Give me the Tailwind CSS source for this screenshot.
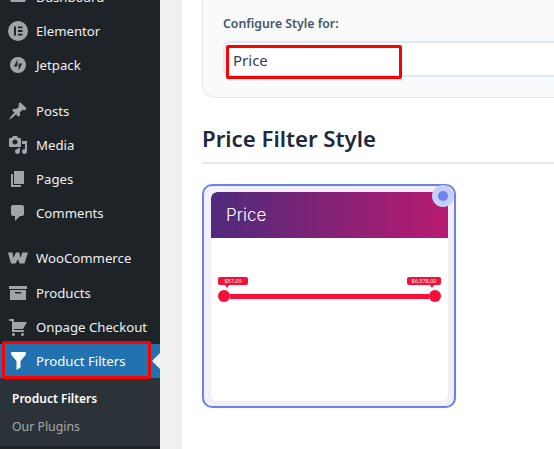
<!DOCTYPE html>
<html lang="en">
<head>
  <meta charset="UTF-8">
  <title>Product Filters</title>
  <script src="https://cdn.jsdelivr.net/npm/@tailwindcss/browser@4"></script>
</head>
<body class="w-[554px] h-[449px] overflow-hidden bg-white font-['Noto_Sans',sans-serif]">
  <div class="flex h-[449px] overflow-hidden">
    <!-- admin menu -->
    <aside class="relative w-[160px] shrink-0 h-[449px] overflow-hidden bg-[#1d2327] text-[#f0f0f1] text-[13.2px]">
      <div class="mt-[-20px] flex flex-col">
        <div class="flex h-[34px] items-center">
          <div class="w-[36px] pl-[8px]"><svg class="w-[20px] h-[20px]" viewBox="0 0 20 20" fill="#a0a5aa"><path d="M3 15a8 8 0 1 1 14 0z"/></svg></div>
          <span class="pt-[2px]">Dashboard</span>
        </div>
        <div class="flex h-[34px] items-center">
          <div class="w-[36px] pl-[8px]"><svg class="w-[20px] h-[20px]" viewBox="0 0 20 20"><circle cx="10" cy="10" r="10" fill="#a0a5aa"/><path fill="#1d2327" d="M6 5.5h2v9H6zM10 5.5h4.500v1.800H10zM10 9.100h4.500v1.800H10zM10 12.700h4.500v1.800H10z"/></svg></div>
          <span class="pt-[2px]">Elementor</span>
        </div>
        <div class="flex h-[34px] items-center">
          <div class="w-[36px] pl-[10px]"><svg class="w-[16px] h-[16px]" viewBox="0 0 16 16"><circle cx="8" cy="8" r="8" fill="#a0a5aa"/><path fill="#1d2327" d="M7.400 2.500v7H3.800zM8.600 13.500v-7h3.600z"/></svg></div>
          <span class="pt-[2px]">Jetpack</span>
        </div>
        <div class="flex h-[34px] mt-[12px] items-center">
          <div class="w-[36px] pl-[8px]"><svg class="w-[20px] h-[20px]" viewBox="0 0 20 20" fill="#a0a5aa"><path d="M10.440 3.020l1.820-1.820 6.360 6.350-1.830 1.820c-1.050-.68-2.480-.57-3.410.36l-.75.75c-.92.930-1.040 2.350-.35 3.410l-1.830 1.820-2.410-2.410-2.800 2.790c-.42.42-3.380 2.710-3.800 2.290s1.860-3.390 2.280-3.810l2.790-2.790L4.100 9.360l1.830-1.820c1.050.69 2.480.57 3.400-.36l.75-.75c.93-.92 1.050-2.350.36-3.410z"/></svg></div>
          <span class="pt-[2px]">Posts</span>
        </div>
        <div class="flex h-[34px] items-center">
          <div class="w-[36px] pl-[8px]"><svg class="w-[20px] h-[20px]" viewBox="0 0 20 20" fill="#a0a5aa"><path d="M13 11V4c0-.55-.45-1-1-1h-1.670L9 1H5L3.670 3H2c-.55 0-1 .45-1 1v7c0 .55.45 1 1 1h10c.55 0 1-.45 1-1zM7 4.500c1.380 0 2.500 1.120 2.500 2.500S8.380 9.500 7 9.500 4.500 8.380 4.500 7 5.620 4.500 7 4.500zM14 6h5v10.500c0 1.380-1.120 2.500-2.500 2.500S14 17.880 14 16.500s1.120-2.500 2.500-2.500c.17 0 .34.02.5.05V9h-3V6zm-4 8.050V13h2v3.500c0 1.380-1.120 2.500-2.500 2.500S7 17.880 7 16.500 8.120 14 9.500 14c.17 0 .34.02.5.05z"/></svg></div>
          <span class="pt-[2px]">Media</span>
        </div>
        <div class="flex h-[34px] items-center">
          <div class="w-[36px] pl-[8px]"><svg class="w-[20px] h-[20px]" viewBox="0 0 20 20" fill="#a0a5aa"><path d="M6 15V2h10v13H6zm-1 1h8v2H3V5h2v11z"/></svg></div>
          <span class="pt-[2px]">Pages</span>
        </div>
        <div class="flex h-[34px] items-center">
          <div class="w-[36px] pl-[8px]"><svg class="w-[20px] h-[20px]" viewBox="0 0 20 20" fill="#a0a5aa"><path d="M5 2h9c1.100 0 2 .9 2 2v7c0 1.100-.9 2-2 2h-2l-5 5v-5H5c-1.100 0-2-.9-2-2V4c0-1.100.9-2 2-2z"/></svg></div>
          <span class="pt-[2px]">Comments</span>
        </div>
        <div class="flex h-[34px] mt-[11px] mb-px items-center">
          <div class="w-[36px] pl-[8px]"><svg class="w-[20px] h-[12px]" viewBox="0 0 20 12" fill="#a0a5aa"><path d="M0 .5h4.500l.7 5.500L8 .5h3.500l.6 5.500L14.500.5H20l-3.500 11H11.500L10 7l-2.500 4.500H3z"/></svg></div>
          <span class="pt-[2px]">WooCommerce</span>
        </div>
        <div class="flex h-[34px] items-center">
          <div class="w-[36px] pl-[8px]"><svg class="w-[20px] h-[20px]" viewBox="0 0 20 20" fill="#a0a5aa"><path d="M1 3h18v3H1zM2 7h16v10H2zM7 9v1.500h6V9z" fill-rule="evenodd"/></svg></div>
          <span class="pt-[2px]">Products</span>
        </div>
        <div class="flex h-[34px] items-center">
          <div class="w-[36px] pl-[8px]"><svg class="w-[20px] h-[20px]" viewBox="0 0 20 20" fill="#a0a5aa"><path d="M6 13h9c.55 0 1 .45 1 1s-.45 1-1 1H5c-.55 0-1-.45-1-1V4H2c-.55 0-1-.45-1-1s.45-1 1-1h3c.55 0 1 .45 1 1v2h13l-4 7H6v1zm-.5 3c.83 0 1.500.67 1.500 1.500S6.330 19 5.500 19 4 18.330 4 17.500 4.670 16 5.500 16zm9 0c.83 0 1.500.67 1.500 1.500s-.67 1.500-1.500 1.500-1.500-.67-1.500-1.500.67-1.500 1.500-1.500z"/></svg></div>
          <span class="pt-[2px]">Onpage Checkout</span>
        </div>
        <div class="relative flex h-[34px] items-center bg-[#2271b1] text-white">
          <div class="w-[36px] pl-[11px]"><svg class="w-[15px] h-[18px]" viewBox="0 0 15 18" fill="#fff"><path d="M1 0h13q1 0 1 1v1.500L9.500 9v6.500L5.500 18V9L0 2.500V1q0-1 1-1z"/></svg></div>
          <span class="pt-[2px]">Product Filters</span>
          <div class="absolute right-0 top-[9px] w-0 h-0 border-y-[8px] border-y-transparent border-r-[8px] border-r-[#f0f0f1]"></div>
        </div>
        <div class="h-[68px] bg-[#2c3338] pt-[7px] pl-[12px] text-[12.3px] leading-[28px]">
          <div class="font-semibold text-[12px] text-white">Product Filters</div>
          <div class="text-[#a7aaad]">Our Plugins</div>
        </div>
      </div>
      <!-- red annotation -->
      <div class="absolute left-[2px] top-[341px] w-[149px] h-[38px] border-[3px] border-[#ff0000] rounded-[2px]"></div>
    </aside>
    <div class="w-[22px] shrink-0 bg-[#f0f0f1]"></div>
    <!-- content -->
    <main class="relative flex-1 min-w-0 pl-[20px] text-[#1e293b]">
      <div class="mt-[-20px] h-[118px] w-[400px] rounded-bl-[14px] border border-r-0 border-[#e2e8f0] bg-[#f8fafc] pl-[20px] pt-[33px]">
        <div class="text-[12.3px] leading-[20px] font-semibold text-[#475569]">Configure Style for:</div>
        <div class="mt-[7px] h-[36px] rounded-l-[8px] border-2 border-r-0 border-[#e2e8f0] bg-white pl-[8px] text-[15px] leading-[34px] text-[#334155]">Price</div>
      </div>
      <h2 class="mt-[24px] pb-[6px] border-b-2 border-[#e2e8f0] text-[22.2px] leading-[34px] font-semibold text-[#1e293b]">Price Filter Style</h2>
      <div class="mt-[20px] w-[254px] h-[224px] rounded-[10px] border-2 border-[#6b80e8] bg-[#f1effa] pt-[6px] pl-[7px] pr-[6px]">
        <div class="h-[209px] rounded-[6px] bg-white overflow-hidden">
          <div class="h-[46px] rounded-t-[6px] bg-linear-to-r/srgb from-[#4f2a7c] to-[#b81a70] pl-[15px] font-['Inter',sans-serif] font-light text-[17px] leading-[46px] text-white">Price</div>
          <div class="px-[7px] pt-[39px]">
            <div class="flex justify-between">
              <div class="relative h-[8px] w-[30px] rounded-[2px] bg-[#f5103a] text-center text-[5.5px] leading-[8px] text-white">$57.00<div class="absolute left-[7px] top-[8px] w-0 h-0 border-x-[2px] border-x-transparent border-t-[3px] border-t-[#f5103a]"></div></div>
              <div class="relative h-[8px] w-[34px] rounded-[2px] bg-[#f5103a] text-center text-[5.5px] leading-[8px] text-white">$6,578.00<div class="absolute right-[7px] top-[8px] w-0 h-0 border-x-[2px] border-x-transparent border-t-[3px] border-t-[#f5103a]"></div></div>
            </div>
            <div class="mt-[5px] flex items-center">
              <div class="w-[12px] h-[12px] rounded-full bg-[#f5103a]"></div>
              <div class="flex-1 h-[5px] bg-[#f5103a]"></div>
              <div class="w-[12px] h-[12px] rounded-full bg-[#f5103a]"></div>
            </div>
          </div>
        </div>
      </div>
      <!-- radio mark over the card corner -->
      <div class="absolute left-[250px] top-[185px] flex h-[22px] w-[22px] items-center justify-center rounded-full bg-[#c5cff8]"><div class="h-[10px] w-[10px] rounded-full bg-[#6b84ec]"></div></div>
      <!-- red annotation -->
      <div class="absolute left-[44px] top-[45px] h-[34px] w-[176px] border-[3px] border-[#ff0000] rounded-[2px]"></div>
    </main>
  </div>
</body>
</html>
